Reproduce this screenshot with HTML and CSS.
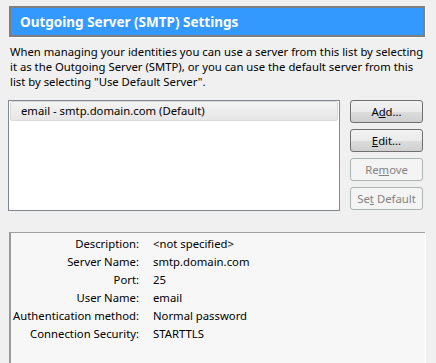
FILE: index.html
```html
<!DOCTYPE HTML>
<html>
    <head>
        <link rel="stylesheet" href="styles.css">
    </head>
    <body>
        <div class="header">
            <h1 class="header-title">Outgoing Server (SMTP) Settings</h1>
        </div>

        <p class="intro">When managing your identities you can use a server from this list by selecting it as the Outgoing Server (SMTP), or you can use the default server from this list by selecting "Use Default Server".</p>

        <div class="servers">
            <div class="server-list">
                <div class="server-item">email - smtp.domain.com (Default)</div>
            </div>
            <div class="server-buttons">
                <button class="button">A<u>d</u>d...</button>
                <button class="button"><u>E</u>dit...</button>
                <button class="button" disabled>Re<u>m</u>ove</button>
                <button class="button" disabled>Se<u>t</u> Default</button>
            </div>
        </div>

        <div class="details">
            <span class="label">Description:</span>
            <span class="value">&lt;not specified&gt;</span>
            <span class="label">Server Name:</span>
            <span class="value">smtp.domain.com</span>
            <span class="label">Port:</span>
            <span class="value">25</span>
            <span class="label">User Name:</span>
            <span class="value">email</span>
            <span class="label">Authentication method:</span>
            <span class="value">Normal password</span>
            <span class="label">Connection Security:</span>
            <span class="value">STARTTLS</span>
        </div>
    </body>
</html>
```

FILE: styles.css
```css
* {
    margin: 0;
    padding: 0;
    box-sizing: border-box;
}

html,
body {
    height: 100%;
    overflow: hidden;
}

body {
    background-color: #f0f0f0;
    font-family: "Noto Sans", "Open Sans", sans-serif;
    font-size: 11.3px;
    color: #000;
    display: flex;
    flex-direction: column;
}

.header {
    margin: 6px 11px 0 9px;
    height: 31px;
    flex-shrink: 0;
    background-color: #3399ff;
    border: 2px solid #7f7f7f;
    box-shadow: 1px 1px 0 #ffffff;
    display: flex;
    align-items: center;
    padding-left: 9px;
}

.header-title {
    color: #ffffff;
    font-size: 13.5px;
    font-weight: bold;
}

.intro {
    margin: 7px 10px 0 10px;
    line-height: 15px;
}

.servers {
    display: flex;
    margin: 11px 13px 0 8px;
    gap: 10px;
}

.server-list {
    flex: 1;
    height: 111px;
    background-color: #ffffff;
    border: 1px solid #828790;
    padding: 0 1px;
}

.server-item {
    height: 20px;
    line-height: 18px;
    padding-left: 10px;
    border: 1px solid #d9d9d9;
    border-radius: 2px;
    background: linear-gradient(#f4f4f4, #e6e6e6);
}

.server-buttons {
    display: flex;
    flex-direction: column;
    gap: 6px;
}

.button {
    width: 73px;
    height: 23px;
    font-family: inherit;
    font-size: 11.3px;
    color: #000;
    border: 1px solid #707070;
    border-radius: 3px;
    background: linear-gradient(#f2f2f2 0%, #ebebeb 50%, #dddddd 51%, #cfcfcf 100%);
}

.button:disabled {
    color: #838383;
    border-color: #adb2b5;
    background: #f4f4f4;
}

.details {
    flex: 1;
    margin: 21px 11px 0 9px;
    background-color: #f7f7f7;
    border-top: 1px solid #a0a0a0;
    border-left: 2px solid #9a9a9a;
    box-shadow: 1px 0 0 #ffffff;
    padding-top: 2px;
    display: grid;
    grid-template-columns: 128px 1fr;
    grid-auto-rows: 18px;
    column-gap: 14px;
    align-content: start;
    line-height: 18px;
}

.label {
    text-align: right;
    white-space: nowrap;
}
```
